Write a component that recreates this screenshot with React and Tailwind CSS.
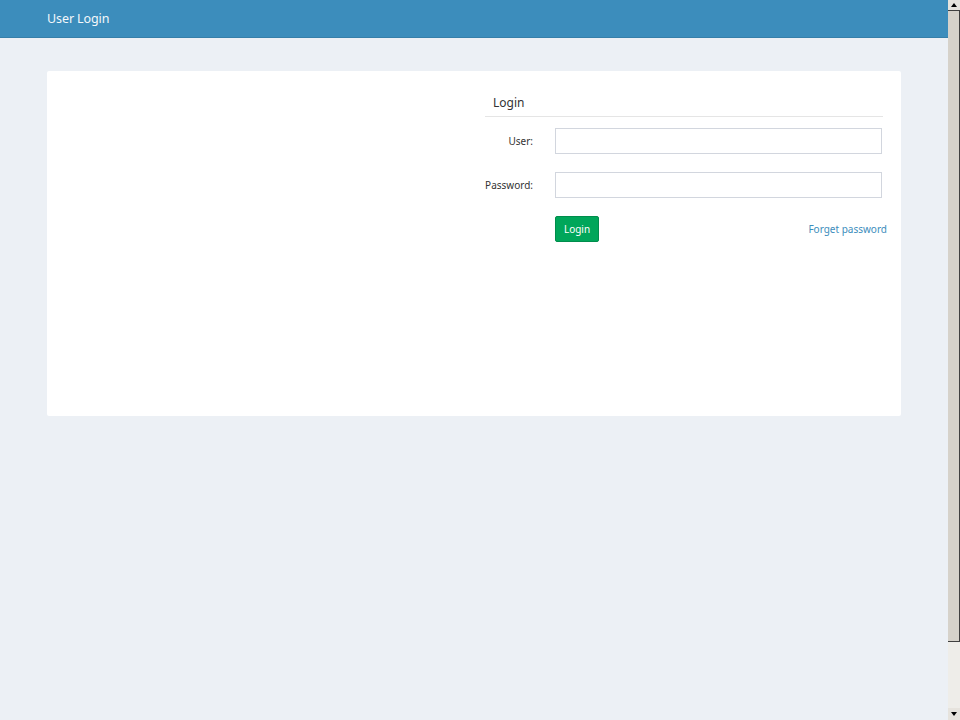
export default function App() {
  return (
    <div
      className="flex h-[720px] overflow-hidden bg-[#ecf0f5] text-[#333]"
      style={{ fontFamily: '"Source Sans Pro", "Noto Sans", "Open Sans", sans-serif' }}
    >
      <div className="w-[948px]">
        <header className="flex h-[38px] items-center border-b border-[#367fa9] bg-[#3c8dbc] pl-[47px] pt-[1px]">
          <span className="text-[12.5px] tracking-[-0.1px] text-[#f4f8fb]">User Login</span>
        </header>

        <div className="px-[47px] pt-[33px]">
          <div className="flex h-[345px] rounded-[2px] bg-white">
            <div className="w-[438px]" />
            <div className="w-[398px] pt-[18px]">
              <div className="flex h-[28px] items-center border-b border-[#e5e5e5] pl-[8px] text-[12px] text-[#333]">
                Login
              </div>

              <div className="mt-[11px] flex items-center">
                <label className="w-[48px] text-right text-[10px] text-[#333]">User:</label>
                <input
                  type="text"
                  className="ml-[22px] h-[26px] w-[327px] border border-[#d2d6de] bg-white px-2 text-[11px] outline-none"
                />
              </div>

              <div className="mt-[18px] flex items-center">
                <label className="w-[48px] text-right text-[10px] text-[#333]">Password:</label>
                <input
                  type="password"
                  className="ml-[22px] h-[26px] w-[327px] border border-[#d2d6de] bg-white px-2 text-[11px] outline-none"
                />
              </div>

              <div className="mt-[18px] flex items-center">
                <button
                  type="button"
                  className="ml-[70px] h-[26px] w-[44px] rounded-[2px] border border-[#008d4c] bg-[#00a65a] text-[10px] text-white"
                >
                  Login
                </button>
                <a href="#" className="ml-auto mr-[-4px] text-[10px] text-[#3c8dbc]">
                  Forget password
                </a>
              </div>
            </div>
          </div>
        </div>
      </div>

      {/* scrollbar */}
      <div className="flex w-[12px] flex-col bg-[#eeede9]">
        <div className="flex h-[11px] items-center justify-center border-b border-[#404040] bg-[#e6e3dd]">
          <span className="h-0 w-0 border-x-[3px] border-b-[4px] border-x-transparent border-b-black" />
        </div>
        <div className="h-[631px] border-r border-b border-[#404040] bg-[#d6d2ca]" />
        <div className="flex-1" />
        <div className="flex h-[12px] items-center justify-center bg-[#e6e3dd]">
          <span className="h-0 w-0 border-x-[3px] border-t-[4px] border-x-transparent border-t-black" />
        </div>
      </div>
    </div>
  );
}
